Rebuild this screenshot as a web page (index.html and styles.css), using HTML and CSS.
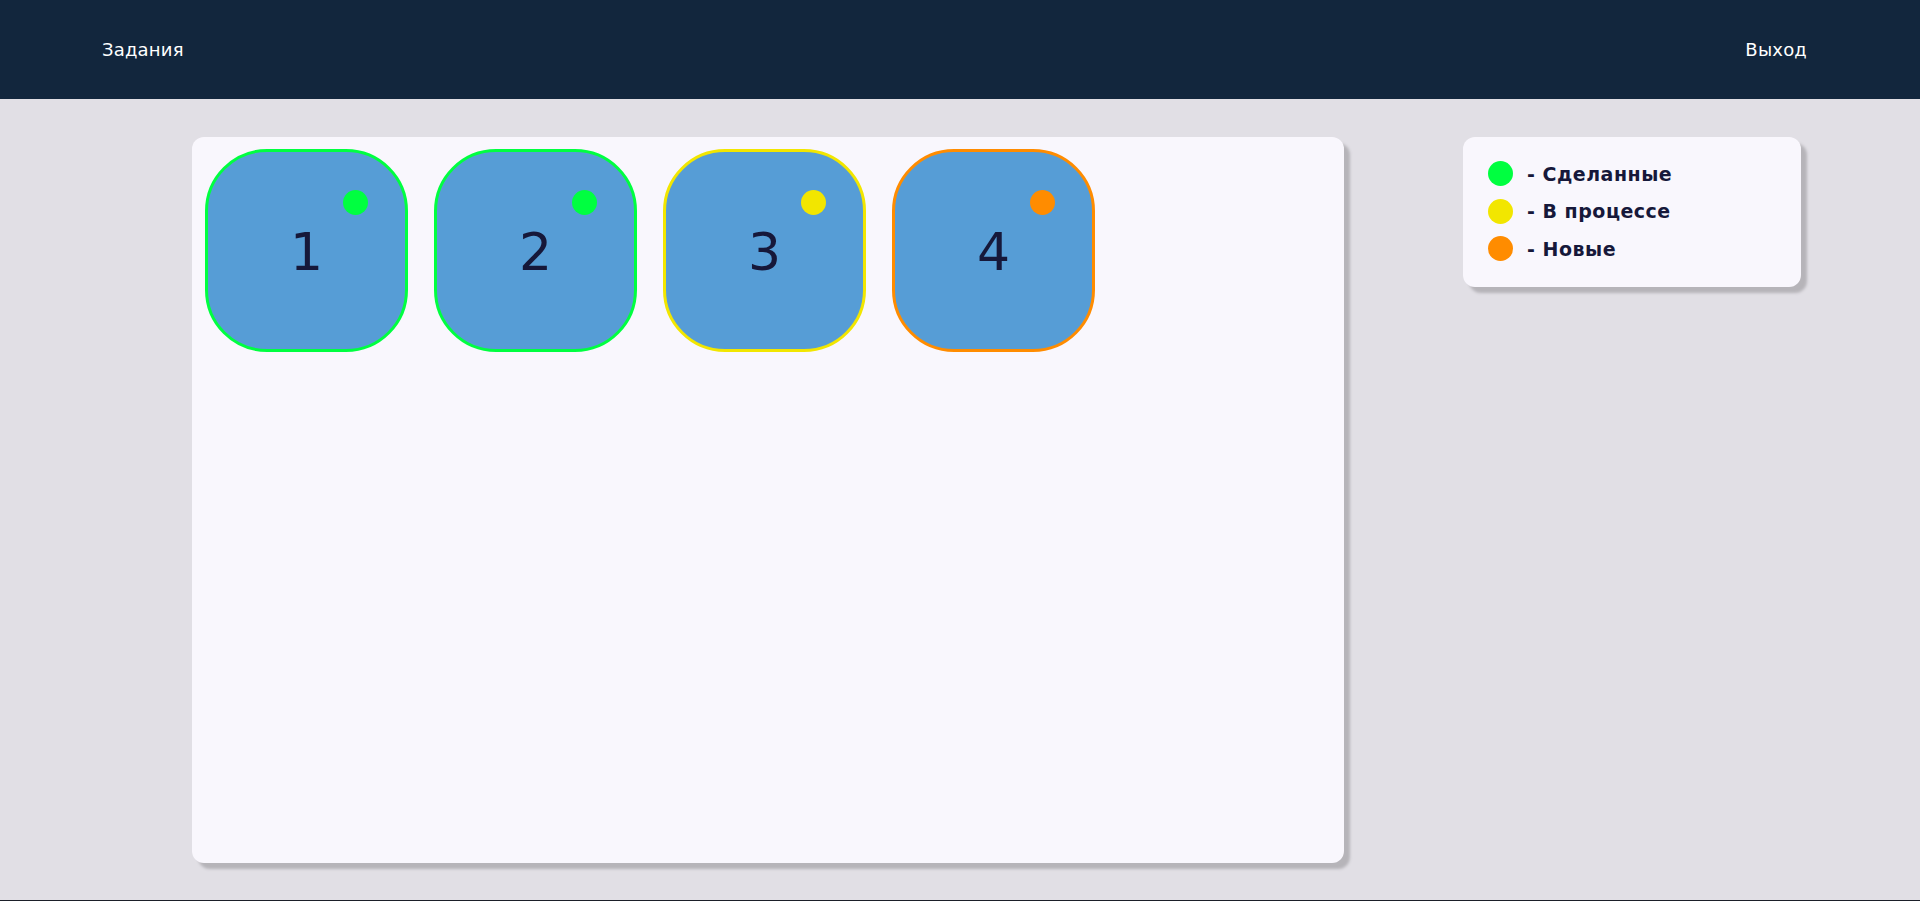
FILE: index.html
```html
<!DOCTYPE html>
<html lang="ru">
<head>
<meta charset="utf-8">
<title>Задания</title>
<link rel="stylesheet" href="styles.css">
</head>
<body>
<header class="topbar">
  <a class="nav-link" href="#">Задания</a>
  <a class="nav-link" href="#">Выход</a>
</header>
<main class="content">
  <section class="board">
    <div class="task task-done"><span class="task-dot"></span><span class="task-num">1</span></div>
    <div class="task task-done"><span class="task-dot"></span><span class="task-num">2</span></div>
    <div class="task task-progress"><span class="task-dot"></span><span class="task-num">3</span></div>
    <div class="task task-new"><span class="task-dot"></span><span class="task-num">4</span></div>
  </section>
  <aside class="legend">
    <div class="legend-row"><span class="legend-dot dot-done"></span><span class="legend-text">- Сделанные</span></div>
    <div class="legend-row"><span class="legend-dot dot-progress"></span><span class="legend-text">- В процессе</span></div>
    <div class="legend-row"><span class="legend-dot dot-new"></span><span class="legend-text">- Новые</span></div>
  </aside>
</main>
<footer class="footer"></footer>
</body>
</html>
```

FILE: styles.css
```css
* { box-sizing: border-box; }

body {
  margin: 0;
  background: #e1dfe5;
  font-family: "DejaVu Sans", Verdana, sans-serif;
}

.topbar {
  height: 99px;
  background: #12263d;
  display: flex;
  align-items: center;
  justify-content: space-between;
  padding: 0 113px 0 102px;
}

.nav-link {
  color: #ffffff;
  text-decoration: none;
  font-size: 18px;
  letter-spacing: 0.2px;
}

.content {
  display: flex;
  align-items: flex-start;
  padding: 38px 0 37px 192px;
}

.board {
  width: 1152px;
  height: 726px;
  background: #f9f7fd;
  border-radius: 12px;
  box-shadow: 6px 6px 3px #b6b4b9;
  display: flex;
  align-items: flex-start;
  gap: 26px;
  padding: 12px 13px;
}

.task {
  position: relative;
  width: 203px;
  height: 203px;
  border: 3px solid #00ff40;
  border-radius: 62px;
  background: #569dd6;
  display: flex;
  align-items: center;
  justify-content: center;
}

.task-done { border-color: #00ff40; }
.task-progress { border-color: #f2e600; }
.task-new { border-color: #ff8c00; }

.task-dot {
  position: absolute;
  left: 135px;
  top: 38px;
  width: 25px;
  height: 25px;
  border-radius: 50%;
}

.task-done .task-dot { background: #00ff40; }
.task-progress .task-dot { background: #f2e600; }
.task-new .task-dot { background: #ff8c00; }

.task-num {
  font-size: 52px;
  color: #16183a;
  line-height: 1;
  margin-top: 3px;
}

.legend {
  margin-left: 119px;
  width: 338px;
  height: 150px;
  background: #f9f7fd;
  border-radius: 12px;
  box-shadow: 6px 6px 3px #b6b4b9;
  padding: 24px 0 0 25px;
  display: flex;
  flex-direction: column;
  gap: 12.5px;
}

.legend-row {
  display: flex;
  align-items: center;
  height: 25px;
}

.legend-dot {
  width: 25px;
  height: 25px;
  border-radius: 50%;
  margin-right: 14px;
  flex-shrink: 0;
}

.dot-done { background: #00ff40; }
.dot-progress { background: #f2e600; }
.dot-new { background: #ff8c00; }

.legend-text {
  font-size: 19px;
  font-weight: bold;
  letter-spacing: 0.5px;
  color: #16183a;
}

.footer {
  height: 40px;
  background: #1b1f29;
}
```
